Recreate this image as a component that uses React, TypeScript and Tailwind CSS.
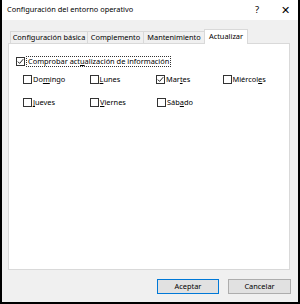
import React from "react";

function Box({ checked }: { checked?: boolean }) {
  return (
    <span className="w-[9px] h-[9px] border border-[#333333] bg-white flex items-center justify-center shrink-0">
      {checked && (
        <svg width="7" height="7" viewBox="0 0 7 7">
          <path d="M0.8 3.6 L2.6 5.4 L6.2 1.2" fill="none" stroke="#222" strokeWidth="1" />
        </svg>
      )}
    </span>
  );
}

function Day({ pre, key2, post, checked }: { pre: string; key2: string; post: string; checked?: boolean }) {
  return (
    <div className="flex items-center gap-[1px] w-[67px]">
      <Box checked={checked} />
      <span className="leading-none whitespace-nowrap">
        {pre}
        <span className="underline underline-offset-1">{key2}</span>
        {post}
      </span>
    </div>
  );
}

export default function App() {
  return (
    <div
      className="w-[300px] h-[304px] bg-[#f0f0f0] border-x-2 border-b-2 border-black flex flex-col text-[7.4px] text-black"
      style={{ fontFamily: '"Noto Sans", "Open Sans", sans-serif' }}
    >
      <div className="h-[20px] bg-white flex items-center pl-[5px] shrink-0">
        <span className="flex-1 text-[7.4px] whitespace-nowrap">Configuración del entorno operativo</span>
        <span className="w-[10px] text-center text-[9.5px] mr-[18px]">?</span>
        <span className="w-[10px] text-center text-[11px] mr-[8px] font-light">✕</span>
      </div>
      <div className="flex flex-col pl-[6px] pt-[9px]">
        <div className="flex items-end h-[14px] ml-[2px] relative z-10 whitespace-nowrap">
          <div className="w-[78px] h-[12px] border border-b-0 border-[#d9d9d9] bg-[#f0f0f0] flex items-center justify-center leading-none">
            Configuración básica
          </div>
          <div className="w-[56px] h-[12px] border border-b-0 border-l-0 border-[#d9d9d9] bg-[#f0f0f0] flex items-center justify-center leading-none">
            Complemento
          </div>
          <div className="w-[61px] h-[12px] border border-b-0 border-l-0 border-[#d9d9d9] bg-[#f0f0f0] flex items-center justify-center leading-none">
            Mantenimiento
          </div>
          <div className="w-[44px] h-[15px] -mb-px border border-b-0 border-[#d9d9d9] bg-white flex items-center justify-center leading-none -ml-px">
            Actualizar
          </div>
        </div>
        <div className="w-[282px] h-[227px] border border-[#d9d9d9] bg-white flex flex-col pl-[7px] pt-[12px]">
          <div className="flex items-center gap-[1px]">
            <Box checked />
            <span className="border border-dotted border-[#333] px-[1px] leading-none py-[1px] whitespace-nowrap">
              Comprobar act<span className="underline underline-offset-1">u</span>alización de información
            </span>
          </div>
          <div className="flex flex-col pl-[7px] pt-[8px] gap-[14px]">
            <div className="flex">
              <Day pre="Do" key2="m" post="ingo" />
              <Day pre="" key2="L" post="unes" />
              <Day pre="Mar" key2="t" post="es" checked />
              <Day pre="Miércol" key2="e" post="s" />
            </div>
            <div className="flex">
              <Day pre="" key2="J" post="ueves" />
              <Day pre="" key2="V" post="iernes" />
              <Day pre="Sáb" key2="a" post="do" />
            </div>
          </div>
        </div>
        <div className="flex justify-end gap-[9px] pr-[7px] mt-[9px]">
          <button className="w-[62px] h-[15px] border border-[#0078d7] bg-[#e1e1e1] flex items-center justify-center leading-none">
            Aceptar
          </button>
          <button className="w-[63px] h-[15px] border border-[#adadad] bg-[#e1e1e1] flex items-center justify-center leading-none">
            Cancelar
          </button>
        </div>
      </div>
    </div>
  );
}
